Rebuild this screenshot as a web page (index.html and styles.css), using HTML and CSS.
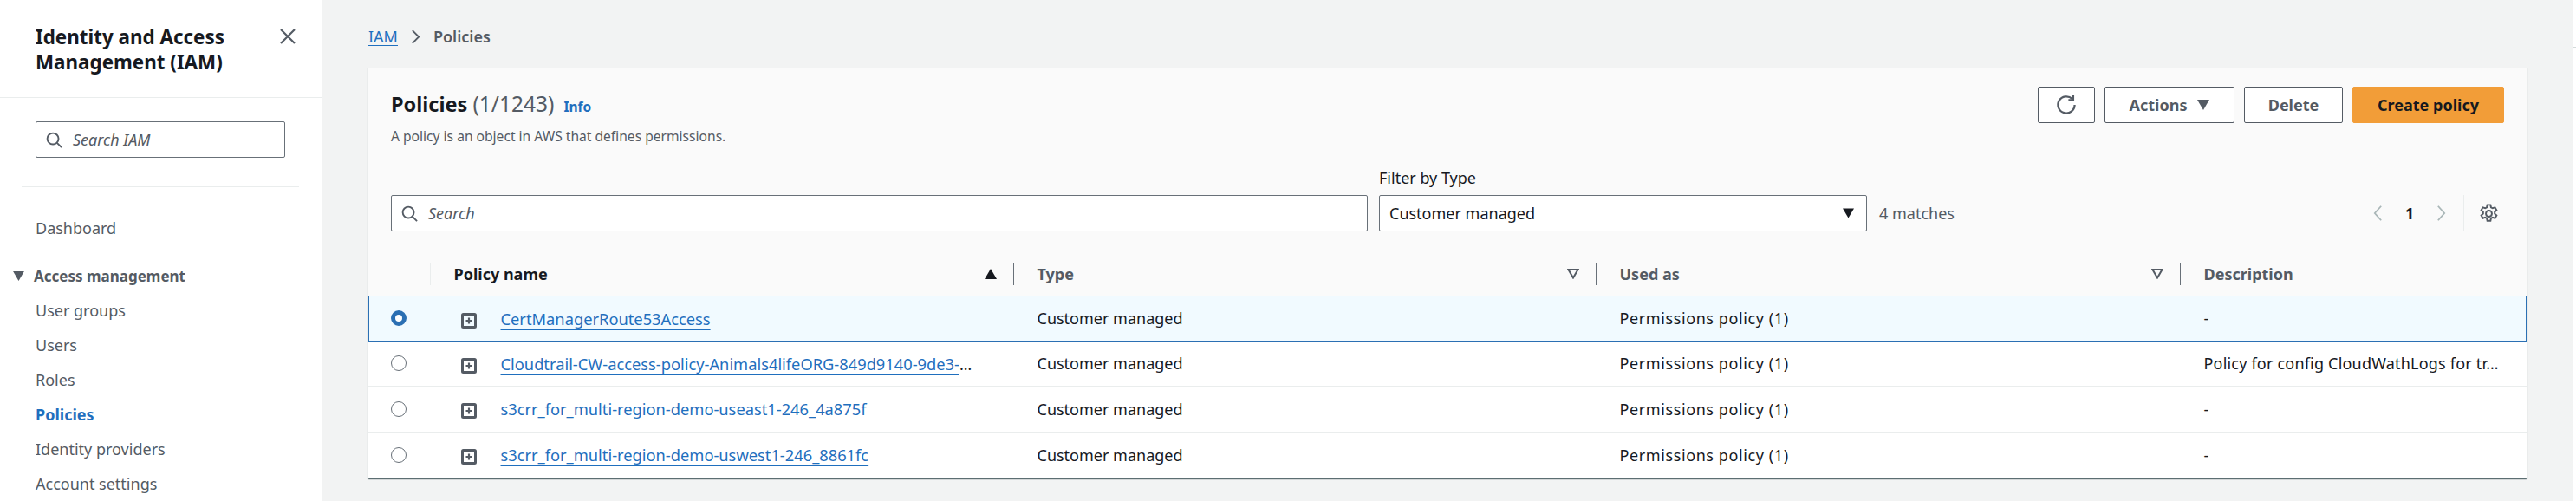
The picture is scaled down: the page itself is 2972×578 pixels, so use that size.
FILE: index.html
```html
<!DOCTYPE html>
<html lang="en">
<head>
<meta charset="utf-8">
<title>Policies | IAM</title>
<link rel="stylesheet" href="styles.css">
</head>
<body>
<div class="page">
  <aside class="side">
    <div class="side-head">
      <h2 class="side-title">Identity and Access Management (IAM)</h2>
      <svg class="side-close" viewBox="0 0 18 18"><path d="M1 1l16 16M17 1L1 17"/></svg>
    </div>
    <div class="side-search">
      <div class="input">
        <svg class="ico-search" viewBox="0 0 20 20"><circle cx="8.5" cy="8.5" r="6.8"/><path d="M13.5 13.5l5.5 5.5"/></svg>
        <span class="placeholder">Search IAM</span>
      </div>
    </div>
    <div class="side-rule"></div>
    <a class="nav nav-top">Dashboard</a>
    <div class="nav-section">
      <svg class="tri-down" viewBox="0 0 14 12"><path d="M0 0h14L7 12z"/></svg>
      <span>Access management</span>
    </div>
    <a class="nav">User groups</a>
    <a class="nav">Users</a>
    <a class="nav">Roles</a>
    <a class="nav nav-active">Policies</a>
    <a class="nav">Identity providers</a>
    <a class="nav">Account settings</a>
  </aside>

  <main class="main">
    <nav class="crumbs">
      <a class="crumb-link">IAM</a>
      <svg class="crumb-sep" viewBox="0 0 12 18"><path d="M2 1l8 8-8 8"/></svg>
      <span class="crumb-cur">Policies</span>
    </nav>

    <section class="card">
      <header class="card-head">
        <div class="head-top">
          <div class="head-text">
            <h1 class="card-title">Policies <span class="count">(1/1243)</span> <a class="info">Info</a></h1>
            <p class="card-desc">A policy is an object in AWS that defines permissions.</p>
          </div>
          <div class="actions">
            <button class="btn btn-icon"><svg viewBox="0 0 20 20"><path d="M15.6 4.2A8 8 0 1 0 18 10"/><path d="M16.6 0.8v4.6H12" /></svg></button>
            <button class="btn btn-actions">Actions <svg class="tri-small" viewBox="0 0 14 12"><path d="M0 0h14L7 12z"/></svg></button>
            <button class="btn btn-delete">Delete</button>
            <button class="btn btn-primary">Create policy</button>
          </div>
        </div>
        <div class="filters">
          <div class="input input-main">
            <svg class="ico-search" viewBox="0 0 20 20"><circle cx="8.5" cy="8.5" r="6.8"/><path d="M13.5 13.5l5.5 5.5"/></svg>
            <span class="placeholder">Search</span>
          </div>
          <div class="filter-type">
            <label class="filter-label">Filter by Type</label>
            <div class="select">
              <span>Customer managed</span>
              <svg class="tri-select" viewBox="0 0 14 12"><path d="M0 0h14L7 12z"/></svg>
            </div>
          </div>
          <span class="matches">4 matches</span>
          <div class="pager">
            <svg class="pg-arrow" viewBox="0 0 12 20"><path d="M10 1L2 10l8 9"/></svg>
            <span class="pg-num">1</span>
            <svg class="pg-arrow" viewBox="0 0 12 20"><path d="M2 1l8 9-8 9"/></svg>
            <span class="pg-sep"></span>
            <svg class="gear" viewBox="0 0 20 20">
              <circle cx="10" cy="10" r="3"/>
              <path d="M8.4 1.2h3.2l.5 2.500 1.600.9 2.400-.8 1.600 2.800-1.900 1.700v1.800l1.900 1.700-1.600 2.800-2.400-.8-1.600.9-.5 2.500H8.400l-.5-2.500-1.600-.9-2.400.8-1.600-2.800 1.900-1.700V8.300L2.300 6.600l1.600-2.800 2.400.8 1.600-.9z"/>
            </svg>
          </div>
        </div>
      </header>

      <table class="tbl">
        <colgroup>
          <col class="c-sel"><col class="c-name"><col class="c-type"><col class="c-used"><col>
        </colgroup>
        <thead>
          <tr>
            <th class="th-sel"><span class="th-in"><span class="sp"></span><i class="th-rule th-rule-light"></i></span></th>
            <th class="th-active"><span class="th-in"><span class="sp">Policy name</span><svg class="sort sort-on" viewBox="0 0 14 12"><path d="M7 0l7 12H0z"/></svg><i class="th-rule"></i></span></th>
            <th><span class="th-in"><span class="sp">Type</span><svg class="sort" viewBox="0 0 14 12"><path d="M1.500 1h11L7 10.500z"/></svg><i class="th-rule"></i></span></th>
            <th><span class="th-in"><span class="sp">Used as</span><svg class="sort" viewBox="0 0 14 12"><path d="M1.500 1h11L7 10.500z"/></svg><i class="th-rule"></i></span></th>
            <th><span class="th-in"><span class="sp">Description</span></span></th>
          </tr>
        </thead>
        <tbody>
          <tr class="sel">
            <td class="td-sel"><span class="radio radio-on"></span></td>
            <td class="td-name"><svg class="expand" viewBox="0 0 18 18"><rect x="1.500" y="1.500" width="15" height="15" rx="1"/><path d="M9 5.500v7M5.500 9h7"/></svg><a class="plink">CertManagerRoute53Access</a></td>
            <td>Customer managed</td>
            <td class="td-used">Permissions policy (1)</td>
            <td>-</td>
          </tr>
          <tr>
            <td class="td-sel"><span class="radio"></span></td>
            <td class="td-name"><svg class="expand" viewBox="0 0 18 18"><rect x="1.500" y="1.500" width="15" height="15" rx="1"/><path d="M9 5.500v7M5.500 9h7"/></svg><a class="plink">Cloudtrail-CW-access-policy-Animals4lifeORG-849d9140-9de3-</a>…</td>
            <td>Customer managed</td>
            <td class="td-used">Permissions policy (1)</td>
            <td class="td-desc">Policy for config CloudWathLogs for tr…</td>
          </tr>
          <tr>
            <td class="td-sel"><span class="radio"></span></td>
            <td class="td-name"><svg class="expand" viewBox="0 0 18 18"><rect x="1.500" y="1.500" width="15" height="15" rx="1"/><path d="M9 5.500v7M5.500 9h7"/></svg><a class="plink">s3crr_for_multi-region-demo-useast1-246_4a875f</a></td>
            <td>Customer managed</td>
            <td class="td-used">Permissions policy (1)</td>
            <td>-</td>
          </tr>
          <tr>
            <td class="td-sel"><span class="radio"></span></td>
            <td class="td-name"><svg class="expand" viewBox="0 0 18 18"><rect x="1.500" y="1.500" width="15" height="15" rx="1"/><path d="M9 5.500v7M5.500 9h7"/></svg><a class="plink">s3crr_for_multi-region-demo-uswest1-246_8861fc</a></td>
            <td>Customer managed</td>
            <td class="td-used">Permissions policy (1)</td>
            <td>-</td>
          </tr>
        </tbody>
      </table>
    </section>
  </main>
  <div class="rail"><span class="rail-tick"></span></div>
</div>
</body>
</html>
```

FILE: styles.css
```css
* { box-sizing: border-box; }
html, body { margin: 0; height: 100%; }
body {
  font-family: "Noto Sans", "Open Sans", sans-serif;
  font-size: 18px;
  color: #16191f;
  background: #f2f3f3;
  overflow: hidden;
}
.page { display: flex; height: 578px; overflow: hidden; }

/* Sidebar */
.side {
  width: 372px;
  flex: none;
  background: #fff;
  border-right: 1px solid #d5dbdb;
  height: 100%;
  color: #545b64;
}
.side-head {
  display: flex;
  justify-content: space-between;
  align-items: flex-start;
  height: 113px;
  padding: 28px 30px 0 41px;
  border-bottom: 1px solid #eaeded;
}
.side-title {
  margin: 0;
  width: 265px;
  font-size: 22.400px;
  line-height: 29px;
  font-weight: 700;
  color: #16191f;
}
.side-close {
  width: 18px;
  height: 18px;
  margin-top: 5px;
  fill: none;
  stroke: #545b64;
  stroke-width: 2.2;
}
.side-search { padding: 27px 42px 33px 41px; }
.input {
  display: flex;
  align-items: center;
  height: 42px;
  background: #fff;
  border: 1px solid #687078;
  border-radius: 2px;
  padding-left: 11px;
}
.ico-search {
  width: 19px;
  height: 19px;
  flex: none;
  fill: none;
  stroke: #545b64;
  stroke-width: 2;
}
.placeholder {
  margin-left: 12px;
  font-style: italic;
  color: #545b64;
}
.side-rule { height: 1px; margin: 0 26px 0 25px; background: #eaeded; }
.nav {
  display: block;
  height: 40px;
  line-height: 40px;
  padding-left: 41px;
}
.nav-top { margin-top: 27px; }
.nav-section {
  display: flex;
  align-items: center;
  gap: 11px;
  height: 40px;
  margin-top: 15px;
  padding-left: 15px;
  font-size: 17px;
  font-weight: 700;
}
.tri-down { width: 13px; height: 11px; fill: #545b64; flex: none; }
.nav-active { color: #1f6fbe; font-weight: 700; }

/* Main */
.main { flex: 1; min-width: 0; padding: 0 53px; }
.crumbs {
  display: flex;
  align-items: center;
  height: 78px;
  padding-top: 6px;
}
.crumb-link { color: #1f6fbe; border-bottom: 1px solid #1f6fbe; line-height: 20px; }
.crumb-sep {
  width: 11px;
  height: 17px;
  margin: 0 15px;
  fill: none;
  stroke: #545b64;
  stroke-width: 2;
}
.crumb-cur { color: #545b64; font-weight: 600; }

.card {
  background: #fff;
  box-shadow: 0 1px 1px rgba(0, 28, 36, .4), 1px 1px 1px rgba(0, 28, 36, .2), -1px 1px 1px rgba(0, 28, 36, .2);
  padding-bottom: 1px;
}
.card-head {
  background: #fafafa;
  border-bottom: 1px solid #eaeded;
  padding: 22px 26px 22px 26px;
}
.head-top { display: flex; justify-content: space-between; height: 89px; }
.card-title {
  margin: 5px 0 0;
  font-size: 23.500px;
  line-height: 30px;
  font-weight: 700;
}
.count { font-size: 24.500px; font-weight: 400; color: #545b64; }
.info { font-size: 15.500px; font-weight: 700; color: #1f6fbe; margin-left: 5px; }
.card-desc { margin: 9px 0 0; font-size: 15.600px; line-height: 20px; color: #545b64; }
.actions { display: flex; gap: 11px; height: 42px; }
.btn {
  height: 42px;
  padding: 0;
  font: 700 18px "Noto Sans", sans-serif;
  color: #545b64;
  background: #fff;
  border: 1px solid #545b64;
  border-radius: 2px;
  display: flex;
  align-items: center;
  justify-content: center;
}
.btn-icon { width: 66px; }
.btn-icon svg { width: 24px; height: 24px; fill: none; stroke: #545b64; stroke-width: 1.900; }
.btn-actions { width: 150px; gap: 12px; }
.tri-small { width: 14px; height: 12px; fill: #545b64; }
.btn-delete { width: 114px; }
.btn-primary { width: 175px; background: #f29d38; border-color: #f29d38; color: #16191f; }

.filters { display: flex; align-items: flex-end; }
.input-main { width: 1127px; }
.filter-type { width: 563px; margin-left: 13px; }
.filter-label { display: block; height: 36px; line-height: 32px; }
.select {
  display: flex;
  align-items: center;
  justify-content: space-between;
  height: 42px;
  background: #fff;
  border: 1px solid #687078;
  border-radius: 2px;
  padding: 0 14px 0 11px;
}
.tri-select { width: 13px; height: 12px; fill: #16191f; }
.matches { margin-left: 14px; height: 42px; line-height: 42px; color: #545b64; }
.pager {
  margin-left: auto;
  margin-right: 6px;
  display: flex;
  align-items: center;
  height: 42px;
}
.pg-arrow { width: 11px; height: 20px; fill: none; stroke: #aab7b8; stroke-width: 2; }
.pg-num { width: 62px; text-align: center; font-weight: 700; }
.pg-sep { width: 1px; height: 42px; margin: 0 17px 0 20px; background: #eaeded; }
.gear { width: 23px; height: 23px; fill: none; stroke: #545b64; stroke-width: 1.700; }

/* Table */
.tbl { width: 100%; table-layout: fixed; border-collapse: separate; border-spacing: 0; }
.c-sel { width: 71.500px; }
.c-name { width: 673px; }
.c-type { width: 672px; }
.c-used { width: 674px; }
.tbl th {
  height: 51px;
  padding: 0;
  background: #fafafa;
  text-align: left;
  font-weight: 700;
  color: #545b64;
}
.tbl th.th-active { color: #16191f; }
.th-in { display: flex; align-items: center; height: 51px; padding-left: 27px; }
.sp { flex: 1; }
.sort { width: 14px; height: 12px; margin-right: 19px; fill: #fafafa; stroke: #545b64; stroke-width: 2; }
.sort-on { fill: #16191f; stroke: none; }
.th-rule { width: 1px; height: 26px; background: #687078; }
.th-rule-light { background: #eaeded; }
.tbl td {
  height: 52.500px;
  padding: 0 0 0 27px;
  border-bottom: 1px solid #eaeded;
  white-space: nowrap;
  vertical-align: middle;
}
.tbl tbody tr:last-child td { border-bottom: 0; }
.tbl td.td-sel { padding-left: 26px; }
.tbl td.td-name { padding-left: 35px; }
.tbl td.td-used { letter-spacing: .6px; }
.tbl td.td-desc { letter-spacing: .2px; }
.tbl tr.sel td {
  background: #f1faff;
  border-top: 1px solid #2b6fb3;
  border-bottom: 1px solid #2b6fb3;
}
.tbl tr.sel td:first-child { border-left: 1px solid #2b6fb3; padding-left: 25px; }
.tbl tr.sel td:last-child { border-right: 1px solid #2b6fb3; }
.radio {
  display: block;
  width: 18px;
  height: 18px;
  border: 1.500px solid #687078;
  border-radius: 50%;
  background: #fff;
}
.radio-on { border: 5.500px solid #2b6fb3; }
.expand {
  width: 18px;
  height: 18px;
  margin-right: 28px;
  vertical-align: middle;
  fill: none;
  stroke: #545b64;
  stroke-width: 3;
}
.expand path { stroke-width: 2.200; }
.plink { font-size: 18.300px; color: #1f6fbe; text-decoration: underline; text-underline-offset: 5px; text-decoration-thickness: 1px; }

/* Right rail */
.rail { width: 4px; flex: none; background: #fff; border-left: 1px solid #d5dbdb; padding-top: 54px; }
.rail-tick { display: block; height: 1px; background: #d5dbdb; }
```
